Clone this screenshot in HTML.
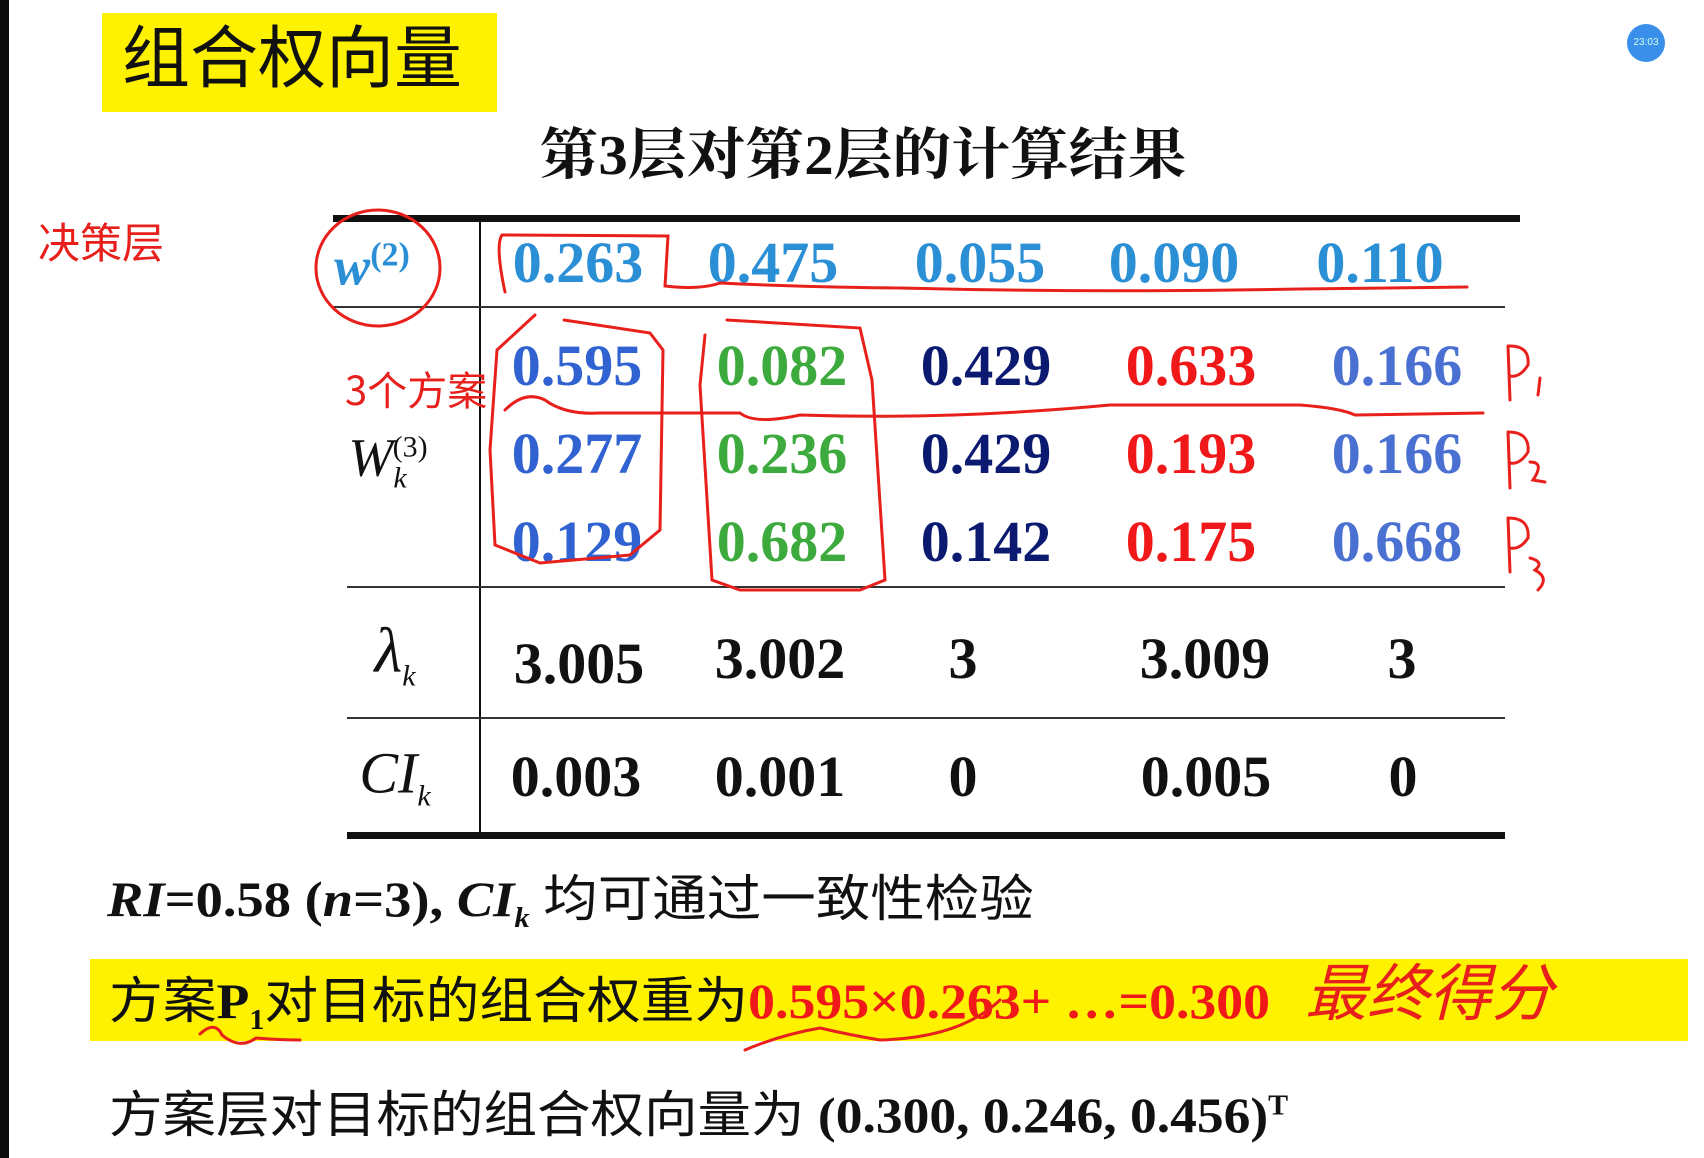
<!DOCTYPE html>
<html><head><meta charset="utf-8"><style>
body{margin:0;width:1704px;height:1158px;background:#fff;position:relative;overflow:hidden;font-family:"Liberation Serif","Noto Serif CJK SC",serif}
.a{position:absolute;white-space:nowrap;line-height:1}
.c{transform:translate(-50%,-50%)}
.n{font-weight:bold;font-size:58px}
.ln{position:absolute;background:#111}
.cjk{font-family:"Liberation Serif","Noto Sans CJK SC",sans-serif}
</style></head><body>
<div class="ln" style="left:0;top:0;width:9px;height:1158px;background:#0c0c0c"></div>
<div style="position:absolute;left:102px;top:13px;width:395px;height:99px;background:#fff200"></div>
<div class="a cjk" style="left:122px;top:25px;font-size:68px;color:#111">组合权向量</div>
<div class="a c cjk" style="left:863px;top:156px;font-size:56px;font-weight:bold;color:#111;font-family:'Liberation Serif','Noto Serif CJK SC',serif;transform:translate(-50%,-50%) scaleX(1.05)">第3层对第2层的计算结果</div>
<div class="ln" style="left:333px;top:215px;width:1187px;height:7px"></div>
<div class="ln" style="left:479px;top:218px;width:2px;height:620px"></div>
<div class="ln" style="left:333px;top:306px;width:1172px;height:2px;background:#333"></div>
<div class="ln" style="left:347px;top:586px;width:1158px;height:2px;background:#333"></div>
<div class="ln" style="left:347px;top:717px;width:1158px;height:2px;background:#333"></div>
<div class="ln" style="left:347px;top:832px;width:1158px;height:7px"></div>
<div class="a c" style="left:372px;top:266px;font-size:54px;font-weight:bold;font-style:italic;color:#2b8fd6">w<sup style="font-size:34px;font-style:normal">(2)</sup></div>
<div class="a c" style="left:395px;top:462px;font-size:54px;font-style:italic;color:#111">W<sub style="font-size:30px">k</sub><sup style="font-size:30px;font-style:normal;position:relative;left:-14px">(3)</sup></div>
<div class="a c" style="left:395px;top:655px;font-size:64px;font-style:italic;color:#111">λ<sub style="font-size:30px">k</sub></div>
<div class="a c" style="left:395px;top:778px;font-size:58px;font-style:italic;color:#111">CI<sub style="font-size:30px">k</sub></div>
<div class="a c n" style="left:578px;top:263px;color:#2b8fd6">0.263</div>
<div class="a c n" style="left:773px;top:263px;color:#2b8fd6">0.475</div>
<div class="a c n" style="left:980px;top:263px;color:#2b8fd6">0.055</div>
<div class="a c n" style="left:1174px;top:263px;color:#2b8fd6">0.090</div>
<div class="a c n" style="left:1380px;top:263px;color:#2b8fd6">0.110</div>
<div class="a c n" style="left:577px;top:366px;color:#3062d2">0.595</div>
<div class="a c n" style="left:577px;top:454px;color:#3062d2">0.277</div>
<div class="a c n" style="left:577px;top:542px;color:#3062d2">0.129</div>
<div class="a c n" style="left:782px;top:366px;color:#3caa3c">0.082</div>
<div class="a c n" style="left:782px;top:454px;color:#3caa3c">0.236</div>
<div class="a c n" style="left:782px;top:542px;color:#3caa3c">0.682</div>
<div class="a c n" style="left:986px;top:366px;color:#0b1a70">0.429</div>
<div class="a c n" style="left:986px;top:454px;color:#0b1a70">0.429</div>
<div class="a c n" style="left:986px;top:542px;color:#0b1a70">0.142</div>
<div class="a c n" style="left:1191px;top:366px;color:#f01818">0.633</div>
<div class="a c n" style="left:1191px;top:454px;color:#f01818">0.193</div>
<div class="a c n" style="left:1191px;top:542px;color:#f01818">0.175</div>
<div class="a c n" style="left:1397px;top:366px;color:#4a70d2">0.166</div>
<div class="a c n" style="left:1397px;top:454px;color:#4a70d2">0.166</div>
<div class="a c n" style="left:1397px;top:542px;color:#4a70d2">0.668</div>
<div class="a c n" style="left:579px;top:664px;color:#111">3.005</div>
<div class="a c n" style="left:780px;top:659px;color:#111">3.002</div>
<div class="a c n" style="left:963px;top:659px;color:#111">3</div>
<div class="a c n" style="left:1205px;top:659px;color:#111">3.009</div>
<div class="a c n" style="left:1402px;top:659px;color:#111">3</div>
<div class="a c n" style="left:576px;top:777px;color:#111">0.003</div>
<div class="a c n" style="left:780px;top:777px;color:#111">0.001</div>
<div class="a c n" style="left:963px;top:777px;color:#111">0</div>
<div class="a c n" style="left:1206px;top:777px;color:#111">0.005</div>
<div class="a c n" style="left:1403px;top:777px;color:#111">0</div>
<div class="a" style="left:107px;top:874px;font-size:50px;font-weight:bold;color:#111;transform-origin:0 50%;transform:scaleX(1.09)"><i>RI</i>=0.58 (<i>n</i>=3), <i>CI<sub style="font-size:28px">k</sub></i> <span class="cjk" style="font-weight:normal">均可通过一致性检验</span></div>
<div style="position:absolute;left:90px;top:959px;width:1598px;height:82px;background:#fff200"></div>
<div class="a" style="left:109px;top:976px;font-size:50px;color:#111;transform-origin:0 50%;transform:scaleX(1.075)"><span class="cjk">方案</span><b>P<sub style="font-size:28px">1</sub></b><span class="cjk">对目标的组合权重为</span><b style="color:#f01818">0.595×0.263+ …=0.300</b></div>
<div class="a" style="left:109px;top:1090px;font-size:50px;color:#111;transform-origin:0 50%;transform:scaleX(1.07)"><span class="cjk">方案层对目标的组合权向量为</span> <b>(0.300, 0.246, 0.456)<sup style="font-size:28px">T</sup></b></div>
<div style="position:absolute;left:1627px;top:24px;width:38px;height:38px;border-radius:50%;background:#3a8fea;color:#cfe;font:10px 'Liberation Sans',sans-serif;text-align:center;line-height:38px">23:03</div>
<svg style="position:absolute;left:0;top:0" width="1704" height="1158" fill="none" stroke="#e8201c" stroke-width="3" stroke-linecap="round">
<ellipse cx="378" cy="268" rx="62" ry="58"/>
<path d="M505 292 Q495 245 502 235 L668 236 L665 286 Q700 290 720 283 Q800 287 900 288 Q1100 293 1300 289 L1467 287"/>
<path d="M564 320 L650 333 L663 350 L660 530 L630 555 L540 563 L495 545 L490 450 L497 350 L535 315"/>
<path d="M727 320 L860 328 L872 380 L885 580 L860 590 L740 590 L712 580 L700 385 L705 335"/>
<path d="M505 410 Q525 390 545 400 Q565 415 600 413 L740 413 Q755 425 800 415 Q950 420 1110 405 L1300 405 Q1340 408 1355 415 L1483 413"/>
<text x="38" y="258" fill="#e8201c" stroke="none" font-size="42" font-family="'Noto Sans CJK SC',sans-serif">决策层</text>
<text x="345" y="405" fill="#e8201c" stroke="none" font-size="40" font-family="'Noto Sans CJK SC',sans-serif">3个方案</text>
<path d="M1508 346 L1510 400 M1508 346 Q1530 345 1528 365 Q1520 378 1510 376 M1540 378 L1538 395"/>
<path d="M1508 432 L1510 488 M1508 432 Q1530 432 1528 452 Q1520 465 1510 463 M1530 462 Q1545 462 1533 480 L1545 482"/>
<path d="M1508 518 L1510 572 M1508 518 Q1530 518 1528 538 Q1520 550 1510 548 M1530 558 Q1545 562 1535 570 Q1550 578 1538 590"/>
<path d="M200 1034 Q215 1020 222 1035 Q240 1050 256 1038 Q280 1040 300 1040"/>
<path d="M745 1050 Q780 1035 820 1028 Q850 1035 880 1040 Q960 1038 1000 1000"/>
<text x="1305" y="1015" fill="#e8201c" stroke="none" font-size="62" font-family="'Noto Sans CJK SC',sans-serif" font-style="italic">最终得分</text>
</svg>
</body></html>
